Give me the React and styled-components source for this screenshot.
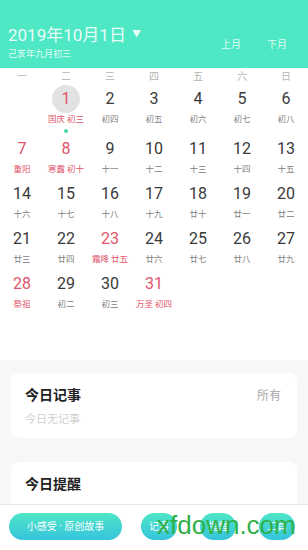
import React from 'react';
import styled, {createGlobalStyle} from 'styled-components';

const GlobalStyle = createGlobalStyle`
    html, body {
        margin: 0;
        padding: 0;
        background: #f6f7f9;
        font-family: Roboto, "Noto Sans CJK SC", sans-serif;
    }
`;

const RED = '#e0546a';

const weekdays = ['一', '二', '三', '四', '五', '六', '日'];

// empty cells before the 1st, then the days of October 2019
const days = [
    null,
    {n: 1, lunar: '国庆 初三', red: true, selected: true, dot: true},
    {n: 2, lunar: '初四'},
    {n: 3, lunar: '初五'},
    {n: 4, lunar: '初六'},
    {n: 5, lunar: '初七'},
    {n: 6, lunar: '初八'},
    {n: 7, lunar: '重阳', red: true},
    {n: 8, lunar: '寒露 初十', red: true},
    {n: 9, lunar: '十一'},
    {n: 10, lunar: '十二'},
    {n: 11, lunar: '十三'},
    {n: 12, lunar: '十四'},
    {n: 13, lunar: '十五'},
    {n: 14, lunar: '十六'},
    {n: 15, lunar: '十七'},
    {n: 16, lunar: '十八'},
    {n: 17, lunar: '十九'},
    {n: 18, lunar: '廿十'},
    {n: 19, lunar: '廿一'},
    {n: 20, lunar: '廿二'},
    {n: 21, lunar: '廿三'},
    {n: 22, lunar: '廿四'},
    {n: 23, lunar: '霜降 廿五', red: true},
    {n: 24, lunar: '廿六'},
    {n: 25, lunar: '廿七'},
    {n: 26, lunar: '廿八'},
    {n: 27, lunar: '廿九'},
    {n: 28, lunar: '祭祖', red: true},
    {n: 29, lunar: '初二'},
    {n: 30, lunar: '初三'},
    {n: 31, lunar: '万圣 初四', red: true},
];

while (days.length < 42) days.push(null);

export default function App() {
    return <Page>
        <GlobalStyle/>
        <Header>
            <TitleBlock>
                <Title>2019年10月1日 <Arrow>▼</Arrow></Title>
                <Subtitle>己亥年九月初三</Subtitle>
            </TitleBlock>
            <MonthNav>
                <NavLink>上月</NavLink>
                <NavLink>下月</NavLink>
            </MonthNav>
        </Header>
        <Calendar>
            <WeekRow>
                {weekdays.map(w => <WeekLabel key={w}>{w}</WeekLabel>)}
            </WeekRow>
            <DayGrid>
                {days.map((d, i) => <Cell key={i} first={i < 7}>
                    {d && <>
                        <DayNum red={d.red} selected={d.selected}>{d.n}</DayNum>
                        <Lunar red={d.red}>{d.lunar}</Lunar>
                        {d.dot && <Dot/>}
                    </>}
                </Cell>)}
            </DayGrid>
        </Calendar>
        <Cards>
            <Card>
                <CardHead>
                    <CardTitle>今日记事</CardTitle>
                    <CardMore>所有</CardMore>
                </CardHead>
                <Empty>今日无记事</Empty>
            </Card>
            <Card>
                <CardHead>
                    <CardTitle>今日提醒</CardTitle>
                </CardHead>
                <Hint>每天都能坚持</Hint>
            </Card>
        </Cards>
        <BottomBar>
            <PillButton>小感受 · 原创故事</PillButton>
            <RoundButtons>
                <RoundButton>记事</RoundButton>
                <RoundButton>提醒</RoundButton>
                <RoundButton>工具</RoundButton>
            </RoundButtons>
        </BottomBar>
        <Watermark>xfdown.com</Watermark>
    </Page>
}

const Page = styled.div`
    position: relative;
    width: 308px;
    height: 550px;
    overflow: hidden;
    background: #f6f7f9;
`;

const Header = styled.div`
    height: 68px;
    background: #4ee8c4;
    display: flex;
    justify-content: space-between;
    align-items: flex-end;
    padding: 0 8px 0 8px;
    box-sizing: border-box;
`;

const TitleBlock = styled.div`
    display: flex;
    flex-direction: column;
    padding-bottom: 8px;
`;

const Title = styled.div`
    color: rgba(255, 255, 255, 0.9);
    font-size: 17px;
    line-height: 22px;
    font-family: Roboto, "Noto Sans CJK SC", sans-serif;
`;

const Arrow = styled.span`
    font-size: 9px;
    vertical-align: 4px;
    margin-left: 2px;
`;

const Subtitle = styled.div`
    color: rgba(255, 255, 255, 0.85);
    font-size: 9px;
    line-height: 12px;
    margin-top: 2px;
`;

const MonthNav = styled.div`
    display: flex;
    gap: 26px;
    padding: 0 13px 17px 0;
`;

const NavLink = styled.span`
    color: rgba(255, 255, 255, 0.85);
    font-size: 10px;
    line-height: 12px;
`;

const Calendar = styled.div`
    background: #fff;
`;

const WeekRow = styled.div`
    display: grid;
    grid-template-columns: repeat(7, 44px);
    height: 17px;
`;

const WeekLabel = styled.div`
    text-align: center;
    font-size: 10px;
    line-height: 17px;
    color: #b4b4b4;
`;

const DayGrid = styled.div`
    display: grid;
    grid-template-columns: repeat(7, 44px);
`;

const Cell = styled.div`
    height: ${({first}) => first ? 50 : 45}px;
    display: flex;
    flex-direction: column;
    align-items: center;
`;

const DayNum = styled.div`
    width: 28px;
    height: 28px;
    border-radius: 50%;
    text-align: center;
    line-height: 28px;
    font-size: 16px;
    color: ${({red}) => red ? RED : '#3a3a3a'};
    background: ${({selected}) => selected ? '#e2e2e2' : 'transparent'};
`;

const Lunar = styled.div`
    font-size: 8.5px;
    line-height: 12px;
    white-space: nowrap;
    color: ${({red}) => red ? RED : '#808080'};
`;

const Dot = styled.div`
    width: 4px;
    height: 4px;
    border-radius: 50%;
    background: #4dd6ad;
    margin-top: 4px;
`;

const Cards = styled.div`
    padding: 13px 11px 0;
    display: flex;
    flex-direction: column;
    gap: 24px;
`;

const Card = styled.div`
    background: #fff;
    border-radius: 8px;
    padding: 11px 14px 10px;
`;

const CardHead = styled.div`
    display: flex;
    justify-content: space-between;
    align-items: center;
    height: 20px;
`;

const CardTitle = styled.div`
    font-size: 14px;
    font-weight: bold;
    color: #222;
`;

const CardMore = styled.div`
    font-size: 12px;
    color: #a8a8a8;
    margin-right: 2px;
`;

const Empty = styled.div`
    margin-top: 8px;
    font-size: 11px;
    line-height: 16px;
    color: #cfcfcf;
`;

const Hint = styled.div`
    margin-top: 10px;
    padding-left: 18px;
    font-size: 11px;
    line-height: 16px;
    color: #999;
`;

const BottomBar = styled.div`
    position: absolute;
    left: 0;
    right: 0;
    bottom: 0;
    height: 46px;
    background: #fff;
    border-top: 1px solid #e8e8e8;
    display: flex;
    align-items: flex-start;
    justify-content: space-between;
    padding: 8px 13px 0 9px;
    box-sizing: border-box;
`;

const buttonBg = `linear-gradient(180deg, #4ee6c6 0%, #36c3dc 100%)`;

const PillButton = styled.div`
    width: 113px;
    height: 27px;
    border-radius: 14px;
    background: ${buttonBg};
    color: #fff;
    font-size: 10px;
    line-height: 27px;
    text-align: center;
`;

const RoundButtons = styled.div`
    display: flex;
    gap: 23px;
`;

const RoundButton = styled.div`
    width: 36px;
    height: 27px;
    border-radius: 14px;
    background: ${buttonBg};
    color: #fff;
    font-size: 10px;
    line-height: 27px;
    text-align: center;
`;

const Watermark = styled.div`
    position: absolute;
    left: 157px;
    top: 510px;
    font-family: "Liberation Sans", Arial, sans-serif;
    font-size: 26px;
    line-height: 30px;
    color: #2fb04a;
    pointer-events: none;
`;
